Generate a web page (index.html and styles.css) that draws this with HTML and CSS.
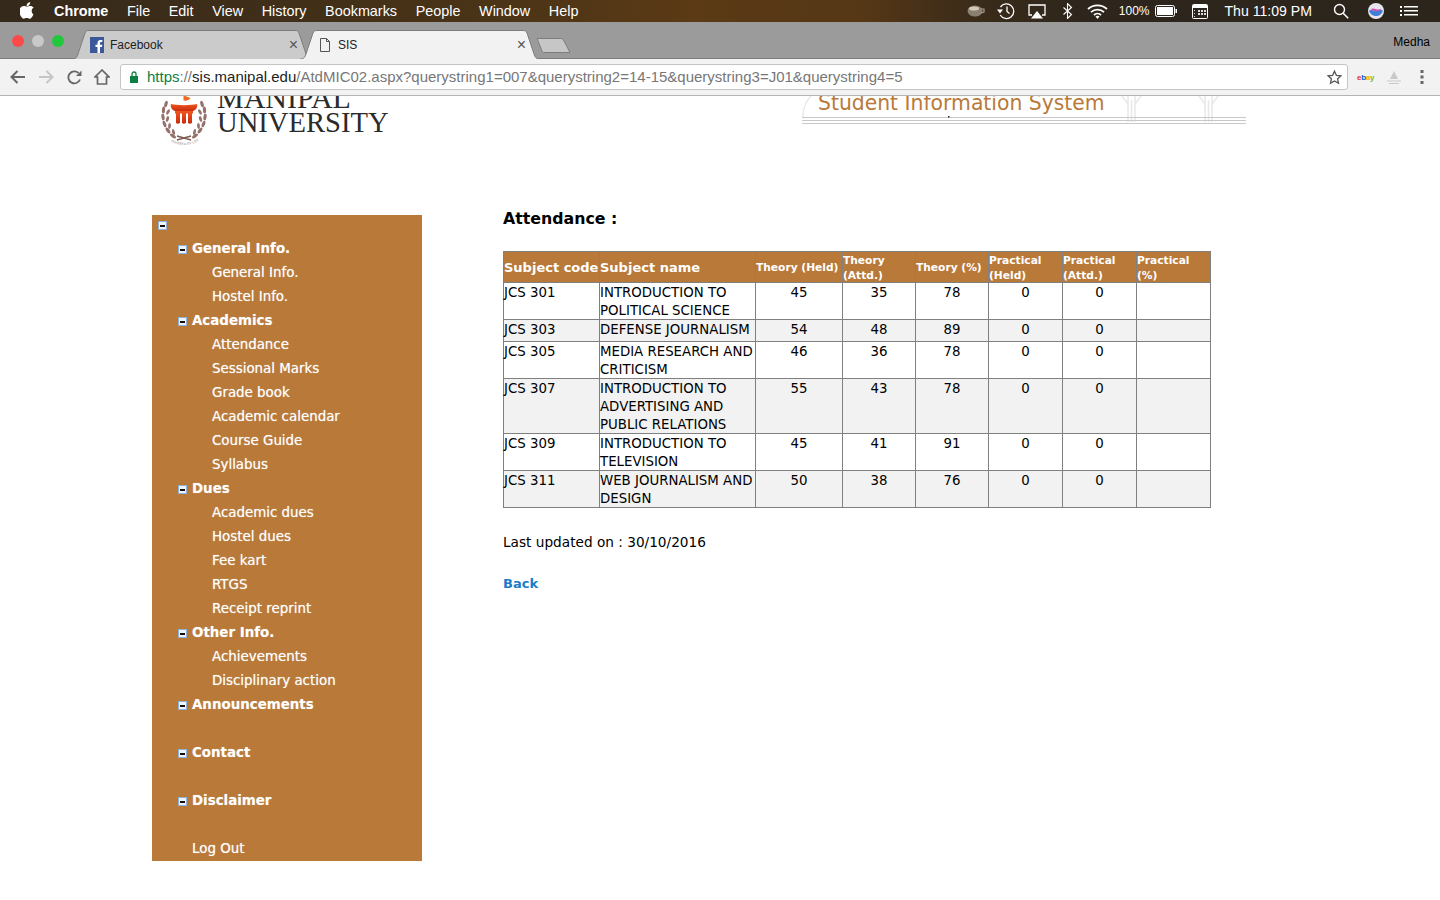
FILE: index.html
```html
<!DOCTYPE html>
<html lang="en">
<head>
    <meta charset="UTF-8">
    <title>SIS</title>
    <link rel="stylesheet" href="styles.css">
</head>
<body>
    <div class="menubar">
        <svg class="apple" width="14" height="17" viewBox="0 0 14 17"><path fill="#fff" d="M10.2 0c.1 1.1-.3 2.1-1 2.9-.7.8-1.7 1.3-2.6 1.2-.1-1 .4-2.1 1-2.8C8.3.6 9.4.1 10.2 0zM13.500 12.300c-.4.9-.6 1.300-1.100 2.100-.7 1.100-1.700 2.400-2.900 2.400-1.100 0-1.400-.7-2.800-.7-1.500 0-1.800.7-2.900.7-1.200 0-2.100-1.200-2.800-2.300C-.9 11.500-1.100 7.900.2 6c.9-1.300 2.300-2.100 3.600-2.100 1.400 0 2.200.7 3.300.7 1.100 0 1.800-.7 3.300-.7 1.200 0 2.400.6 3.300 1.700-2.900 1.600-2.400 5.700-.2 6.700z"/></svg>
        <span class="menu-item app-name">Chrome</span>
        <span class="menu-item">File</span>
        <span class="menu-item">Edit</span>
        <span class="menu-item">View</span>
        <span class="menu-item">History</span>
        <span class="menu-item">Bookmarks</span>
        <span class="menu-item">People</span>
        <span class="menu-item">Window</span>
        <span class="menu-item">Help</span>
        <div class="status">
            <svg class="st-cup" width="18" height="12" viewBox="0 0 18 12"><ellipse cx="8" cy="6" rx="7.5" ry="5.5" fill="#8b7f70"/><ellipse cx="7" cy="3.5" rx="5" ry="2" fill="#cfc8bb"/><path d="M14 4h3v3l-3 1" fill="none" stroke="#a79c8c" stroke-width="1.2"/></svg>
            <svg class="st-time" width="19" height="18" viewBox="0 0 19 18"><path d="M4.5 5A7.300 7.300 0 1 1 4.200 13" fill="none" stroke="#fff" stroke-width="1.3"/><path d="M1 7.500h6L4 11.500z" fill="#fff"/><path d="M11 4.500V9.500l2.500 2" fill="none" stroke="#fff" stroke-width="1.3"/></svg>
            <svg class="st-air" width="18" height="15" viewBox="0 0 18 15"><path d="M4 11H1V1h16v10h-3" fill="none" stroke="#fff" stroke-width="1.3"/><path d="M9 7l6 7.500H3z" fill="#fff"/></svg>
            <svg class="st-bt" width="11" height="16" viewBox="0 0 11 16"><path d="M1.500 4.500l8 7-4 4V.5l4 4-8 7" fill="none" stroke="#fff" stroke-width="1.1"/></svg>
            <svg class="st-wifi" width="21" height="15" viewBox="0 0 21 15"><g fill="none" stroke="#fff" stroke-width="1.8"><path d="M1 5a14 14 0 0 1 19 0"/><path d="M4 8.200a9.500 9.500 0 0 1 13 0"/><path d="M7 11a5 5 0 0 1 7 0"/></g><path d="M10.500 15l-2-2.400a3 3 0 0 1 4 0z" fill="#fff"/></svg>
            <span class="st-pct">100%</span>
            <svg class="st-batt" width="22" height="12" viewBox="0 0 22 12"><rect x=".5" y=".5" width="19" height="11" rx="2" fill="none" stroke="#fff"/><rect x="2" y="2" width="16" height="8" fill="#fff"/><rect x="20.5" y="4" width="1.5" height="4" fill="#fff"/></svg>
            <svg class="st-cal" width="16" height="15" viewBox="0 0 16 15"><rect x=".5" y=".5" width="15" height="14" rx="1" fill="#2c251c" stroke="#fff"/><rect x="1" y="1" width="14" height="3" fill="#fff"/><path d="M2 6h1v1H2zM2 9h1v1H2zM2 12h1v1H2zM6 6h2v2H6zM9 6h2v2H9zM12 6h2v2h-2zM6 9h2v2H6zM9 9h2v2H9zM12 9h2v2h-2z" fill="#ddd"/></svg>
            <span class="st-clock">Thu 11:09 PM</span>
            <svg class="st-search" width="16" height="16" viewBox="0 0 16 16"><circle cx="6.5" cy="6.5" r="5" fill="none" stroke="#fff" stroke-width="1.4"/><path d="M10.200 10.200l5 5" stroke="#fff" stroke-width="1.6"/></svg>
            <svg class="st-siri" width="16" height="16" viewBox="0 0 16 16"><circle cx="8" cy="8" r="8" fill="#e8e4ee"/><path d="M1 8c3-3 4 1 7 0s4-3 7 0c-2 4-4 5-7 5S2 11 1 8z" fill="#3f7fd6"/><path d="M3 6c3-2 6 2 10 0-1 3-8 3-10 0z" fill="#d04fb0"/></svg>
            <svg class="st-list" width="18" height="12" viewBox="0 0 18 12"><path d="M0 1h2v2H0zM0 5h2v2H0zM0 9h2v2H0zM4 1h14v1.500H4zM4 5h14v1.500H4zM4 9h14v1.500H4z" fill="#fff"/></svg>
        </div>
    </div>

    <div class="tabstrip">
        <div class="traffic">
            <i class="dot dot-red"></i>
            <i class="dot dot-grey"></i>
            <i class="dot dot-green"></i>
        </div>
        <div class="tab tab-back">
            <svg class="tab-shape" width="240" height="29" viewBox="0 0 240 29"><path d="M0 29C4 29 5 27 6 24L13 3C14 1 15 .5 17 .5H223C225 .5 226 1 227 3L234 24C235 27 236 29 240 29" fill="#cbcbcb" stroke="#7d7d7d"/></svg>
            <svg class="favicon" width="16" height="16" viewBox="0 0 16 16"><rect width="14" height="16" x="1" fill="#3b5998"/><path d="M11 16v-6h2l.3-2.300H11V6.200c0-.7.2-1.100 1.100-1.100h1.200V3c-.3 0-1-.1-1.800-.1-1.800 0-3 1.100-3 3.100v1.700h-2V10h2v6z" fill="#fff"/></svg>
            <span class="tab-title">Facebook</span>
            <span class="tab-close">×</span>
        </div>
        <div class="tab tab-front">
            <svg class="tab-shape" width="240" height="29" viewBox="0 0 240 29"><path d="M0 29C4 29 5 27 6 24L13 3C14 1 15 .5 17 .5H223C225 .5 226 1 227 3L234 24C235 27 236 29 240 29" fill="#f2f2f2" stroke="#7d7d7d"/></svg>
            <svg class="favicon" width="16" height="16" viewBox="0 0 16 16"><path d="M3.500 1.500h6l3 3v10h-9z M9.500 1.500v3h3" fill="none" stroke="#555"/></svg>
            <span class="tab-title">SIS</span>
            <span class="tab-close">×</span>
        </div>
        <svg class="newtab" width="36" height="17" viewBox="0 0 36 17"><path d="M1 1.500H25C26 1.500 27 2 27.500 3L34 15.500H8C7 15.500 6.500 15 6 14z" fill="#c6c6c6" stroke="#7d7d7d"/></svg>
        <span class="profile">Medha</span>
    </div>

    <div class="toolbar">
        <svg class="nav-icon nav-back" width="16" height="14" viewBox="0 0 16 14"><path d="M15 7H2M7.500 1L1.500 7l6 6" fill="none" stroke="#666" stroke-width="2"/></svg>
        <svg class="nav-icon nav-fwd" width="16" height="14" viewBox="0 0 16 14"><path d="M1 7h13M8.500 1l6 6-6 6" fill="none" stroke="#c6c6c6" stroke-width="2"/></svg>
        <svg class="nav-icon nav-reload" width="15" height="15" viewBox="0 0 15 15"><path d="M13 9.500A6 6 0 1 1 11.500 3" fill="none" stroke="#666" stroke-width="1.8"/><path d="M9 6h5.500V.5z" fill="#666"/></svg>
        <svg class="nav-icon nav-home" width="16" height="16" viewBox="0 0 16 16"><path d="M8 1L1 8h2.500v7h9V8H15z" fill="none" stroke="#666" stroke-width="1.7"/></svg>
        <div class="omnibox">
            <svg class="lock" width="10" height="12" viewBox="0 0 10 12"><path d="M1 5h8v7H1z" fill="#0b8043"/><path d="M3 5V3a2 2 0 0 1 4 0v2" fill="none" stroke="#0b8043" stroke-width="1.3"/></svg>
            <span class="url"><span class="url-scheme">https</span>://<span class="url-host">sis.manipal.edu</span>/AtdMIC02.aspx?querystring1=007&amp;querystring2=14-15&amp;querystring3=J01&amp;querystring4=5</span>
            <svg class="star" width="15" height="15" viewBox="0 0 15 15"><path d="M7.500 1.200l1.900 4.100 4.500.5-3.300 3 .9 4.500-4-2.300-4 2.300.9-4.500-3.300-3 4.500-.5z" fill="none" stroke="#555" stroke-width="1.3"/></svg>
        </div>
        <span class="ebay"><b class="e1">e</b><b class="e2">b</b><b class="e3">a</b><b class="e4">y</b></span>
        <svg class="ext-icon" width="14" height="13" viewBox="0 0 14 13"><path d="M7 0L11 8H3z" fill="#c9c9c9"/><path d="M0 10h14M2 12.500h10" stroke="#c9c9c9"/></svg>
        <svg class="kebab" width="4" height="14" viewBox="0 0 4 14"><path d="M.5 0h3v3h-3zM.5 5.500h3v3h-3zM.5 11h3v3h-3z" fill="#666"/></svg>
    </div>

    <div class="page">
        <div class="page-head">
            <div class="logo">
                <svg class="crest" width="48" height="56" viewBox="0 0 48 56">
                    <defs>
                        <linearGradient id="torch" x1="0" y1="0" x2="0" y2="1">
                            <stop offset="0" stop-color="#f0561c"/>
                            <stop offset="1" stop-color="#c92c10"/>
                        </linearGradient>
                        <path id="sealArc" d="M8 47C15 55 33 55 40 47"/>
                    </defs>
                    <g fill="#94716a">
                        <ellipse cx="6" cy="12" rx="1.6" ry="3.4" transform="rotate(15 6 12)"/>
                        <ellipse cx="3.5" cy="18" rx="1.6" ry="3.4" transform="rotate(5 3.5 18)"/>
                        <ellipse cx="8" cy="20" rx="1.4" ry="3" transform="rotate(30 8 20)"/>
                        <ellipse cx="3" cy="25" rx="1.6" ry="3.4" transform="rotate(-8 3 25)"/>
                        <ellipse cx="7.5" cy="27" rx="1.4" ry="3" transform="rotate(18 7.5 27)"/>
                        <ellipse cx="4.5" cy="32" rx="1.6" ry="3.4" transform="rotate(-20 4.5 32)"/>
                        <ellipse cx="9.5" cy="34" rx="1.4" ry="3" transform="rotate(5 9.5 34)"/>
                        <ellipse cx="8" cy="38.5" rx="1.6" ry="3.4" transform="rotate(-35 8 38.5)"/>
                        <ellipse cx="13.5" cy="40" rx="1.4" ry="3" transform="rotate(-15 13.5 40)"/>
                        <ellipse cx="13" cy="44" rx="1.6" ry="3.4" transform="rotate(-55 13 44)"/>
                        <ellipse cx="42" cy="12" rx="1.6" ry="3.4" transform="rotate(-15 42 12)"/>
                        <ellipse cx="44.5" cy="18" rx="1.6" ry="3.4" transform="rotate(-5 44.5 18)"/>
                        <ellipse cx="40" cy="20" rx="1.4" ry="3" transform="rotate(-30 40 20)"/>
                        <ellipse cx="45" cy="25" rx="1.6" ry="3.4" transform="rotate(8 45 25)"/>
                        <ellipse cx="40.5" cy="27" rx="1.4" ry="3" transform="rotate(-18 40.5 27)"/>
                        <ellipse cx="43.5" cy="32" rx="1.6" ry="3.4" transform="rotate(20 43.5 32)"/>
                        <ellipse cx="38.5" cy="34" rx="1.4" ry="3" transform="rotate(-5 38.5 34)"/>
                        <ellipse cx="40" cy="38.5" rx="1.6" ry="3.4" transform="rotate(35 40 38.5)"/>
                        <ellipse cx="34.5" cy="40" rx="1.4" ry="3" transform="rotate(15 34.5 40)"/>
                        <ellipse cx="35" cy="44" rx="1.6" ry="3.4" transform="rotate(55 35 44)"/>
                    </g>
                    <path d="M17 44l14 4M31 44l-14 4" stroke="#7d5a50" stroke-width="1.5"/>
                    <path d="M23.500 3c2 1.500 5 2 7 3-1 2-4 3-7 2.500z" fill="#f06a1e"/>
                    <path d="M11 12c5 1.500 21 1.500 26 0 1 3-1 6-4 7H15c-3-1-5-4-4-7z" fill="url(#torch)"/>
                    <path d="M15 19h18v2.500H15zM16 21.500h4V31c-1.500 1-3 1-4 0zM22 21.500h4V31c-1.500 1-3 1-4 0zM28 21.500h4V31c-1.500 1-3 1-4 0z" fill="url(#torch)"/>
                    <text class="crest-seal"><textPath href="#sealArc" startOffset="4">INSPIRED BY LIFE</textPath></text>
                </svg>
                <div class="wordmark">
                    <div class="word-top">MANIPAL</div>
                    <div class="word-bottom">UNIVERSITY</div>
                </div>
            </div>
            <div class="sis-banner">
                <svg class="banner-art" width="444" height="28" viewBox="0 0 444 28">
                    <g fill="none" stroke="#e8e8e8" stroke-width="1.5">
                        <path d="M1 21C1 12 5 4 9 0"/>
                        <path d="M320 0l6 8v18M339 0l-6 8v18M326 0v10M333 0v10M329.500 4v22"/>
                        <path d="M397 0l6 8v18M416 0l-6 8v18M403 0v10M410 0v10M406.500 4v22"/>
                    </g>
                    <path d="M0 21.500h444M0 24.500h444M0 27.500h444" stroke="#c8c8c8"/>
                    <rect x="146" y="20" width="1.5" height="1.5" fill="#222"/>
                </svg>
                <span class="sis-title">Student Information System</span>
            </div>
        </div>

        <div class="page-body">
            <nav class="sidebar">
                <div class="tree-root"><i class="tree-toggle"></i></div>

                <a class="tree-head"><i class="tree-toggle"></i>General Info.</a>
                <a class="tree-leaf">General Info.</a>
                <a class="tree-leaf">Hostel Info.</a>

                <a class="tree-head"><i class="tree-toggle"></i>Academics</a>
                <a class="tree-leaf">Attendance</a>
                <a class="tree-leaf">Sessional Marks</a>
                <a class="tree-leaf">Grade book</a>
                <a class="tree-leaf">Academic calendar</a>
                <a class="tree-leaf">Course Guide</a>
                <a class="tree-leaf">Syllabus</a>

                <a class="tree-head"><i class="tree-toggle"></i>Dues</a>
                <a class="tree-leaf">Academic dues</a>
                <a class="tree-leaf">Hostel dues</a>
                <a class="tree-leaf">Fee kart</a>
                <a class="tree-leaf">RTGS</a>
                <a class="tree-leaf">Receipt reprint</a>

                <a class="tree-head"><i class="tree-toggle"></i>Other Info.</a>
                <a class="tree-leaf">Achievements</a>
                <a class="tree-leaf">Disciplinary action</a>

                <a class="tree-head spaced"><i class="tree-toggle"></i>Announcements</a>
                <a class="tree-head spaced"><i class="tree-toggle"></i>Contact</a>
                <a class="tree-head spaced"><i class="tree-toggle"></i>Disclaimer</a>
                <a class="tree-logout">Log Out</a>
            </nav>

            <main class="content">
                <h2 class="content-title">Attendance :</h2>
                <table class="grid">
                    <colgroup>
                        <col class="c-code"><col class="c-name"><col class="c-held"><col class="c-attd">
                        <col class="c-pct"><col class="c-prac"><col class="c-prac"><col class="c-prac">
                    </colgroup>
                    <thead>
                        <tr>
                            <th class="big">Subject code</th>
                            <th class="big">Subject name</th>
                            <th class="mid">Theory (Held)</th>
                            <th class="two">Theory (Attd.)</th>
                            <th class="mid">Theory (%)</th>
                            <th class="two">Practical (Held)</th>
                            <th class="two">Practical (Attd.)</th>
                            <th class="two">Practical (%)</th>
                        </tr>
                    </thead>
                    <tbody>
                        <tr>
                            <td>JCS 301</td><td>INTRODUCTION TO POLITICAL SCIENCE</td>
                            <td class="num">45</td><td class="num">35</td><td class="num">78</td><td class="num">0</td><td class="num">0</td><td></td>
                        </tr>
                        <tr>
                            <td>JCS 303</td><td>DEFENSE JOURNALISM</td>
                            <td class="num">54</td><td class="num">48</td><td class="num">89</td><td class="num">0</td><td class="num">0</td><td></td>
                        </tr>
                        <tr>
                            <td>JCS 305</td><td>MEDIA RESEARCH AND CRITICISM</td>
                            <td class="num">46</td><td class="num">36</td><td class="num">78</td><td class="num">0</td><td class="num">0</td><td></td>
                        </tr>
                        <tr>
                            <td>JCS 307</td><td>INTRODUCTION TO ADVERTISING AND PUBLIC RELATIONS</td>
                            <td class="num">55</td><td class="num">43</td><td class="num">78</td><td class="num">0</td><td class="num">0</td><td></td>
                        </tr>
                        <tr>
                            <td>JCS 309</td><td>INTRODUCTION TO TELEVISION</td>
                            <td class="num">45</td><td class="num">41</td><td class="num">91</td><td class="num">0</td><td class="num">0</td><td></td>
                        </tr>
                        <tr>
                            <td>JCS 311</td><td>WEB JOURNALISM AND DESIGN</td>
                            <td class="num">50</td><td class="num">38</td><td class="num">76</td><td class="num">0</td><td class="num">0</td><td></td>
                        </tr>
                    </tbody>
                </table>
                <p class="updated">Last updated on : 30/10/2016</p>
                <a class="back-link">Back</a>
            </main>
        </div>
    </div>
</body>
</html>
```

FILE: styles.css
```css
html, body {
    margin: 0;
    height: 900px;
    overflow: hidden;
    background: #fff;
}
body {
    font-family: "DejaVu Sans", sans-serif;
    color: #000;
}

/* mac menu bar */
.menubar {
    height: 22px;
    display: flex;
    align-items: center;
    padding-left: 20px;
    font-family: "Liberation Sans", Arial, sans-serif;
    font-size: 14.4px;
    color: #fff;
    background: linear-gradient(90deg, #35291b 0%, #3f2e19 18%, #4b3417 35%, #5b3a15 48%, #553716 60%, #3c2c19 67%, #2e261c 75%, #2c251c 100%);
}
.apple {
    margin-right: 20px;
    margin-top: -2px;
}
.menu-item {
    margin-right: 18.6px;
}
.app-name {
    font-weight: bold;
}
.status {
    margin-left: auto;
    display: flex;
    align-items: center;
    padding-right: 22px;
}
.st-time { margin-left: 11px; }
.st-air { margin-left: 13px; }
.st-bt { margin-left: 16px; }
.st-wifi { margin-left: 14px; }
.st-pct { margin-left: 11px; font-size: 12px; }
.st-batt { margin-left: 5px; }
.st-cal { margin-left: 15px; }
.st-clock { margin-left: 17px; font-size: 14.1px; }
.st-search { margin-left: 21px; }
.st-siri { margin-left: 19px; }
.st-list { margin-left: 16px; }

/* tabs */
.tabstrip {
    height: 37px;
    box-sizing: border-box;
    display: flex;
    align-items: flex-end;
    padding-left: 72px;
    background: #9b9b9b;
    border-bottom: 1px solid #7d7d7d;
    position: relative;
}
.traffic {
    position: absolute;
    left: 12px;
    top: 13px;
    display: flex;
    gap: 8px;
}
.dot {
    width: 12px;
    height: 12px;
    border-radius: 50%;
}
.dot-red { background: #fc4a4a; }
.dot-grey { background: #c8c8c8; }
.dot-green { background: #22c83c; }
.tab {
    width: 240px;
    height: 29px;
    margin-right: -12px;
    margin-bottom: -1px;
    position: relative;
    display: flex;
    align-items: center;
    padding: 0 14px 0 17px;
    box-sizing: border-box;
    font-family: "Liberation Sans", Arial, sans-serif;
    font-size: 12px;
}
.tab-shape {
    position: absolute;
    left: 0;
    top: 0;
}
.favicon, .tab-title, .tab-close {
    position: relative;
}
.tab-title {
    margin-left: 5px;
    color: #222;
}
.tab-close {
    margin-left: auto;
    font-size: 16px;
    color: #555;
}
.newtab {
    margin-left: 8px;
    margin-bottom: 4px;
}
.profile {
    margin-left: auto;
    margin-right: 10px;
    margin-bottom: 9px;
    font-family: "Liberation Sans", Arial, sans-serif;
    font-size: 12px;
    color: #000;
}

/* address bar */
.toolbar {
    height: 37px;
    box-sizing: border-box;
    display: flex;
    align-items: center;
    background: #f2f2f2;
    border-bottom: 1px solid #b4b4b4;
    padding-left: 10px;
}
.nav-fwd { margin-left: 12px; }
.nav-reload { margin-left: 13px; }
.nav-home { margin-left: 12px; }
.omnibox {
    width: 1228px;
    height: 26px;
    box-sizing: border-box;
    margin-left: 10px;
    display: flex;
    align-items: center;
    padding: 0 5px 0 8px;
    background: #fff;
    border: 1px solid #c4c4c4;
    border-radius: 3px;
}
.url {
    margin-left: 8px;
    margin-bottom: 2px;
    font-family: "Liberation Sans", Arial, sans-serif;
    font-size: 15px;
    color: #777;
    white-space: nowrap;
}
.url-scheme { color: #0b8043; }
.url-host { color: #222; }
.star { margin-left: auto; }
.ebay {
    margin-left: 9px;
    font-family: "Liberation Sans", Arial, sans-serif;
    font-size: 8px;
    letter-spacing: -.3px;
}
.e1 { color: #e53238; }
.e2 { color: #0064d2; }
.e3 { color: #f5af02; }
.e4 { color: #86b817; }
.ext-icon { margin-left: 13px; }
.kebab { margin-left: 19px; }

/* page */
.page-head {
    height: 119px;
    overflow: hidden;
    display: flex;
    justify-content: space-between;
    padding-left: 160px;
    padding-right: 194px;
}
.logo {
    display: flex;
    margin-top: -4px;
    height: 60px;
}
.crest {
    flex: none;
}
.crest-seal {
    font-family: "Liberation Serif", serif;
    font-size: 3.5px;
    fill: #8f7f7a;
}
.wordmark {
    margin-left: 9px;
    margin-top: -7px;
    font-family: "Liberation Serif", "Times New Roman", serif;
    color: #2b2b2b;
    line-height: 25px;
}
.word-top { font-size: 30px; }
.word-bottom { font-size: 28.6px; }
.sis-banner {
    width: 444px;
    height: 28px;
    position: relative;
}
.banner-art {
    position: absolute;
    left: 0;
    top: 0;
}
.sis-title {
    display: block;
    position: relative;
    margin: -6px 0 0 16px;
    font-size: 20.35px;
    line-height: 26px;
    color: #b97a39;
    white-space: nowrap;
}
.page-body {
    display: flex;
    padding-left: 152px;
}

/* left menu */
.sidebar {
    width: 270px;
    height: 646px;
    box-sizing: border-box;
    flex: none;
    background: #b97a39;
    color: #fff;
    font-size: 13.4px;
    line-height: 24px;
}
.tree-root {
    height: 21px;
    padding-left: 6px;
    display: flex;
    align-items: center;
}
.tree-head, .tree-leaf, .tree-logout {
    display: block;
    height: 23px;
    padding-top: 1px;
    white-space: nowrap;
}
.tree-head {
    padding-left: 26px;
    font-weight: bold;
    text-shadow: 0 0 1px rgba(255, 255, 255, .4);
}
.tree-head.spaced {
    margin-bottom: 24px;
}
.tree-leaf {
    padding-left: 60px;
    text-shadow: 0 0 1px rgba(255, 255, 255, .6);
}
.tree-logout {
    padding-left: 40px;
    text-shadow: 0 0 1px rgba(255, 255, 255, .6);
}
.tree-toggle {
    display: inline-block;
    width: 9px;
    height: 9px;
    box-sizing: border-box;
    margin-right: 5px;
    vertical-align: -1px;
    background: linear-gradient(#111, #111) center / 5px 2px no-repeat, #f0f4fa;
    border: 1px solid #8fb0d8;
}
.tree-root .tree-toggle {
    margin: 0;
}

/* main column */
.content {
    margin-left: 81px;
}
.content-title {
    margin: -6px 0 0;
    font-size: 15.8px;
    line-height: 20px;
    font-weight: bold;
}
.grid {
    margin-top: 22px;
    width: 708px;
    table-layout: fixed;
    border-collapse: collapse;
    font-size: 13.33px;
    line-height: 18px;
}
.c-code { width: 96px; }
.c-name { width: 156px; }
.c-held { width: 87px; }
.c-attd { width: 73px; }
.c-pct { width: 73px; }
.c-prac { width: 74px; }
.grid th, .grid td {
    border: 1px solid #808080;
    padding: 0;
    vertical-align: top;
    text-align: left;
}
.grid th {
    height: 30px;
    background: #b97a39;
    color: #fff;
    font-size: 10.67px;
    line-height: 15px;
    vertical-align: middle;
}
.grid th.big {
    font-size: 13px;
    white-space: nowrap;
}
.grid th.mid {
    white-space: nowrap;
}
.grid th.two {
    height: 29px;
    padding-top: 1px;
}
.grid td {
    height: 20px;
    padding-top: 1px;
}
.grid td::after, .grid th.two::after {
    content: "";
    display: block;
    margin-top: -1px;
}
.grid td.num {
    text-align: center;
}
.grid tbody tr:nth-child(even) td {
    background: #f2f2f2;
}
.updated {
    margin: 25px 0 0;
    font-size: 13.67px;
    line-height: 18px;
}
.back-link {
    display: block;
    margin-top: 24px;
    font-size: 13px;
    line-height: 18px;
    font-weight: bold;
    color: #1b7cc8;
}
```
